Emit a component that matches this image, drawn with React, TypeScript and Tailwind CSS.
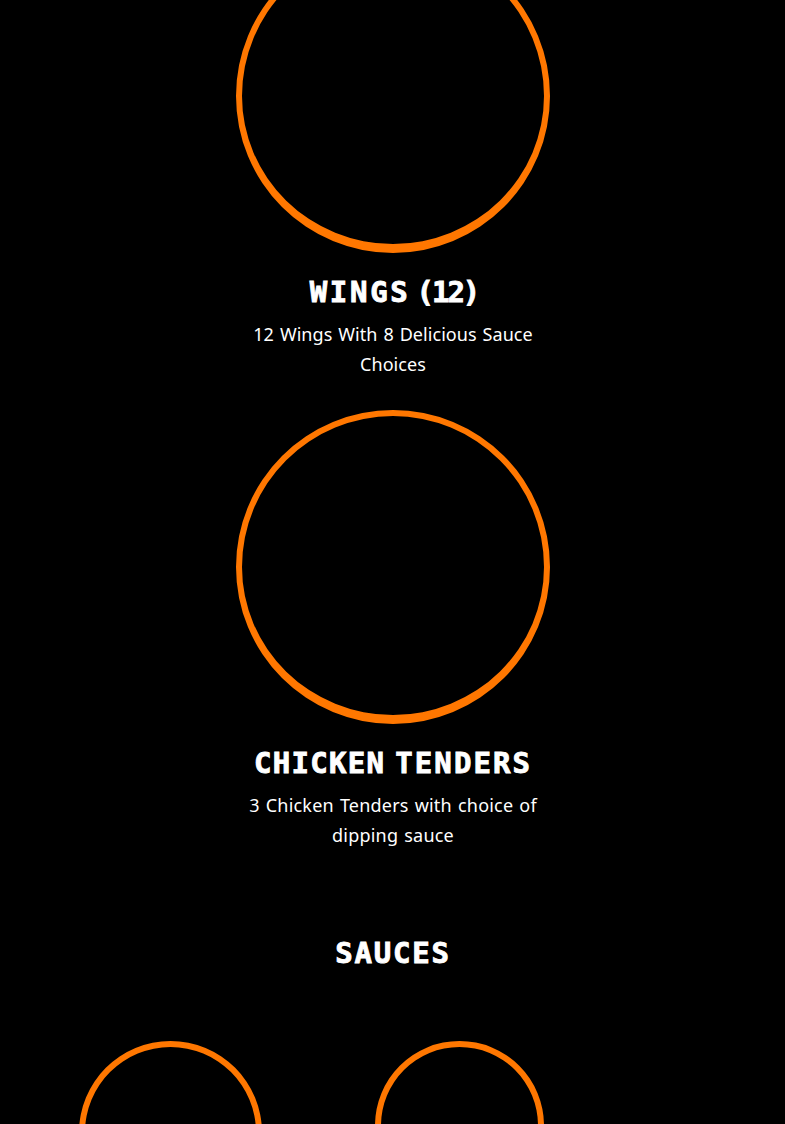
const heading =
  "flex justify-center whitespace-nowrap font-['DejaVu_Sans_Mono',monospace] text-[29px] font-bold uppercase leading-[36px] text-white [-webkit-text-stroke:0.9px_white]";
const body =
  "text-center font-['Noto_Sans',sans-serif] text-[18px] leading-[30px] text-white whitespace-nowrap [word-spacing:1.2px]";
const ring =
  'h-[314px] w-[314px] shrink-0 rounded-full border-[6px] border-b-[9px] border-[#ff7700]';
const smallRing = 'shrink-0 rounded-full border-[6px] border-b-[9px] border-[#ff7700]';

export default function App() {
  return (
    <main className="flex h-[1124px] w-[785px] flex-col items-center overflow-hidden bg-black pl-px">
      <section className="-mt-[61px] flex flex-col items-center">
        <div className={ring} />
        <h2 className={`${heading} mt-[21px] gap-[6px] pl-[2px]`}>
          <span className="tracking-[2.7px]">Wings</span>
          <span className="tracking-[-2px]">(12)</span>
        </h2>
        <p className={`${body} mt-[9px] tracking-[0.05px]`}>
          12 Wings With 8 Delicious Sauce
          <br />
          Choices
        </p>
      </section>
      <section className="mt-[31px] flex flex-col items-center">
        <div className={ring} />
        <h2 className={`${heading} mt-[21px] gap-[10px]`}>
          <span className="tracking-[1.3px]">Chicken</span>
          <span className="tracking-[2.1px]">Tenders</span>
        </h2>
        <p className={`${body} mt-[9px] tracking-[0.2px]`}>
          3 Chicken Tenders with choice of
          <br />
          dipping sauce
        </p>
      </section>
      <h2 className={`${heading} mt-[85px] tracking-[1.8px]`}>Sauces</h2>
      <section className="mt-[70px] flex w-full shrink-0 gap-[113px] pl-[78px]">
        <div className={`${smallRing} h-[183px] w-[183px]`} />
        <div className={`${smallRing} h-[169px] w-[169px]`} />
      </section>
    </main>
  );
}
